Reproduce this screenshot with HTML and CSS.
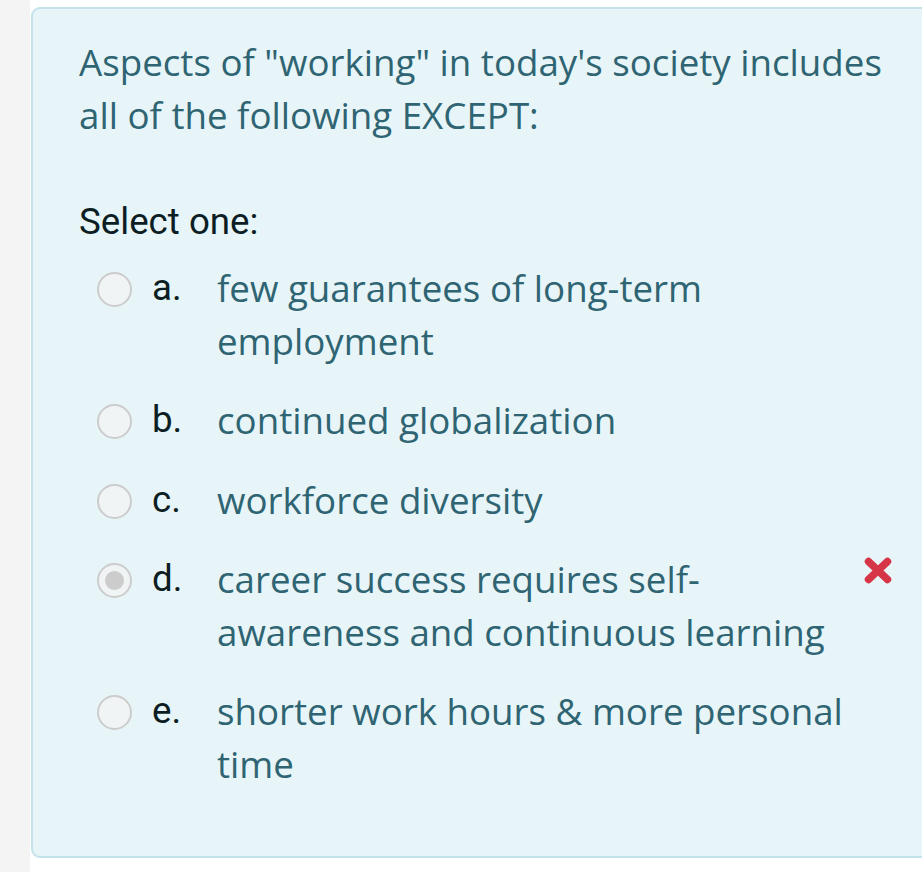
FILE: index.html
```html
<!DOCTYPE html>
<html lang="en">
<head>
<meta charset="utf-8">
<title>Question</title>
<link rel="stylesheet" href="styles.css">
</head>
<body>
<div class="strip"></div>
<main class="main">
  <div class="card">
    <div class="qtext">Aspects of "working" in today's society includes all of the following EXCEPT:</div>
    <div class="prompt">Select one:</div>
    <div class="answers">
      <div class="opt">
        <span class="radio"></span>
        <span class="lbl">a.</span>
        <span class="txt">few guarantees of long-term employment</span>
      </div>
      <div class="opt">
        <span class="radio"></span>
        <span class="lbl">b.</span>
        <span class="txt">continued globalization</span>
      </div>
      <div class="opt">
        <span class="radio"></span>
        <span class="lbl">c.</span>
        <span class="txt">workforce diversity</span>
      </div>
      <div class="opt">
        <span class="radio checked"></span>
        <span class="lbl">d.</span>
        <span class="txt">career success requires self-awareness and continuous learning</span>
        <svg class="wrong" viewBox="0 0 30 27" width="30" height="27" aria-hidden="true">
          <path d="M5.5 4.5 L24.5 22.5 M24.5 4.5 L5.5 22.5" stroke="#d63447" stroke-width="7.5" stroke-linecap="round" fill="none"/>
        </svg>
      </div>
      <div class="opt">
        <span class="radio"></span>
        <span class="lbl">e.</span>
        <span class="txt">shorter work hours &amp; more personal time</span>
      </div>
    </div>
  </div>
</main>
</body>
</html>
```

FILE: styles.css
```css
html, body {
  margin: 0;
  padding: 0;
  height: 100%;
}
body {
  display: flex;
  overflow: hidden;
  background: #ffffff;
  width: 922px;
  height: 872px;
}
.strip {
  width: 30px;
  flex: none;
  background: #f4f4f4;
}
.main {
  flex: 1;
  padding-top: 7px;
  padding-left: 1px;
  overflow: hidden;
}
.card {
  width: 940px;
  box-sizing: border-box;
  background: #e7f5f8;
  border: 2px solid #c3e2ea;
  border-radius: 9px;
  padding: 27px 0 52px 46px;
}
.qtext {
  width: 840px;
  font-family: "Open Sans", sans-serif;
  font-size: 36.7px;
  line-height: 52.5px;
  color: #2f6473;
}
.prompt {
  margin-top: 55px;
  font-family: Roboto, sans-serif;
  font-size: 36.7px;
  line-height: 52.5px;
  color: #0c1e24;
}
.answers {
  display: flex;
  flex-direction: column;
}
.opt {
  display: flex;
  align-items: flex-start;
  padding: 13.5px 0;
}
.radio {
  flex: none;
  width: 35px;
  height: 35px;
  box-sizing: border-box;
  margin: 10px 20px 0 18px;
  border: 2.5px solid #cccccc;
  border-radius: 50%;
  background: #f1f4f5;
  display: flex;
  align-items: center;
  justify-content: center;
}
.radio.checked::after {
  content: "";
  width: 19px;
  height: 19px;
  border-radius: 50%;
  background: #cccccc;
}
.lbl {
  flex: none;
  width: 65px;
  font-family: Roboto, sans-serif;
  font-size: 36.7px;
  line-height: 52.5px;
  color: #0c1e24;
}
.txt {
  flex: none;
  width: 643px;
  font-family: "Open Sans", sans-serif;
  font-size: 36.7px;
  line-height: 52.5px;
  color: #2f6473;
}
.wrong {
  flex: none;
  margin: 4px 0 0 3px;
}
```
